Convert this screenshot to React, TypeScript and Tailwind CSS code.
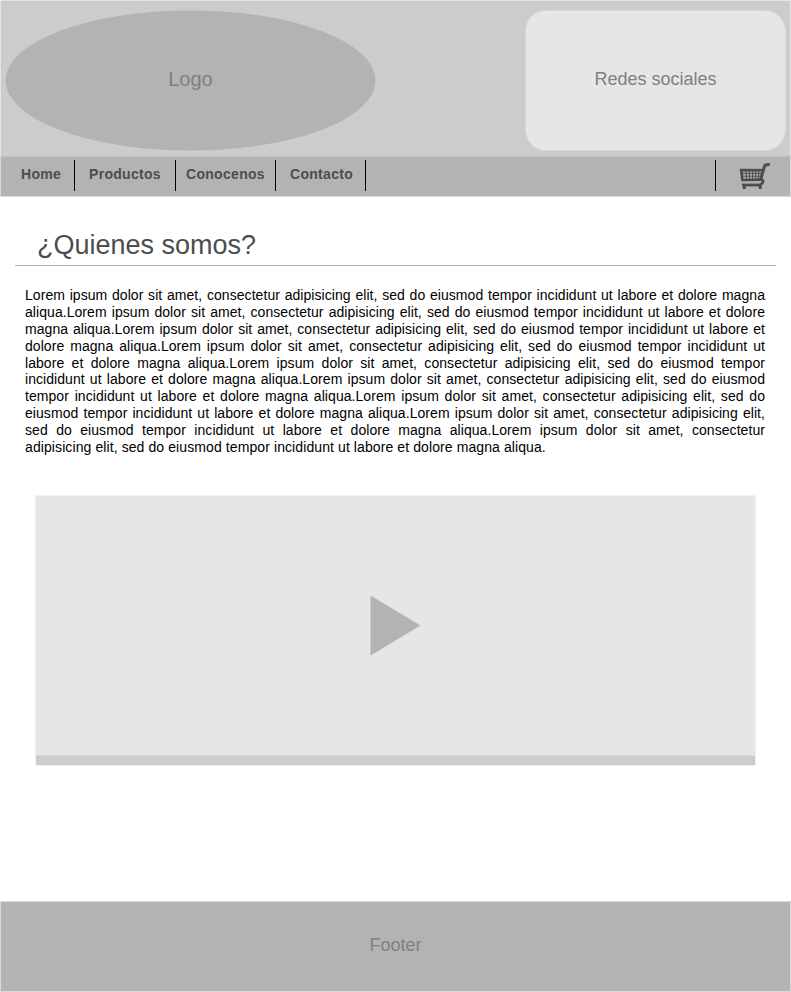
const links = [
  { label: "Home", cell: "w-[75px] pl-[21px]" },
  { label: "Productos", cell: "w-[101px] pl-[14px]" },
  { label: "Conocenos", cell: "w-[100px] pl-[10px]" },
  { label: "Contacto", cell: "w-[90px] pl-[14px]" },
];

const lines = [
  "Lorem ipsum dolor sit amet, consectetur adipisicing elit, sed do eiusmod tempor incididunt ut labore et dolore magna",
  "aliqua.Lorem ipsum dolor sit amet, consectetur adipisicing elit, sed do eiusmod tempor incididunt ut labore et dolore",
  "magna aliqua.Lorem ipsum dolor sit amet, consectetur adipisicing elit, sed do eiusmod tempor incididunt ut labore et",
  "dolore magna aliqua.Lorem ipsum dolor sit amet, consectetur adipisicing elit, sed do eiusmod tempor incididunt ut",
  "labore et dolore magna aliqua.Lorem ipsum dolor sit amet, consectetur adipisicing elit, sed do eiusmod tempor",
  "incididunt ut labore et dolore magna aliqua.Lorem ipsum dolor sit amet, consectetur adipisicing elit, sed do eiusmod",
  "tempor incididunt ut labore et dolore magna aliqua.Lorem ipsum dolor sit amet, consectetur adipisicing elit, sed do",
  "eiusmod tempor incididunt ut labore et dolore magna aliqua.Lorem ipsum dolor sit amet, consectetur adipisicing elit,",
  "sed do eiusmod tempor incididunt ut labore et dolore magna aliqua.Lorem ipsum dolor sit amet, consectetur",
];

function CartIcon() {
  return (
    <svg width="33" height="31" viewBox="0 0 33 31" fill="none" stroke="#4d4d4d">
      <path d="M29.6 4.4l-3 .5c-.5.1-.8.4-1 1L21.8 19" strokeWidth="3" strokeLinecap="round" strokeLinejoin="round" />
      <path d="M.8 10.2h23.4" strokeWidth="2.8" />
      <path d="M2.2 10l1.2 10L22 19.6" strokeWidth="2.6" />
      <path d="M3 13.4h19.5M3.3 16.2h18.5M7 10l.5 9.5M10.3 10l.3 9.5M13.6 10v9.5M16.9 10l-.2 9.5M20 10l-.6 9" strokeWidth="1" />
      <path d="M21.5 19.4c2.2.4 2.9 1.4 2.5 2.6-.4 1.2-1.4 1.7-2.3 2.5" strokeWidth="2.6" />
      <path d="M3 25H22.8" strokeWidth="2.8" />
      <path d="M5.2 25v4M21.2 25v4" strokeWidth="3" />
    </svg>
  );
}

export default function App() {
  return (
    <div className="flex h-[992px] w-[791px] flex-col bg-white font-['Liberation_Sans',Arial,sans-serif]">
      <header className="flex h-[156px] shrink-0 justify-between border border-b-0 border-[#e5e5e5] bg-[#cccccc] pt-[9px] pr-1 pl-1">
        <div className="grid h-[141px] w-[371px] place-items-center">
          <svg className="col-start-1 row-start-1" width="371" height="141">
            <ellipse cx="185.5" cy="70.5" rx="185" ry="70" fill="#b3b3b3" />
          </svg>
          <span className="col-start-1 row-start-1 -mt-[3px] text-[20px] leading-6 text-[#808080]">Logo</span>
        </div>
        <div className="flex h-[141px] w-[261px] items-center justify-center rounded-[21px] border border-[#d9d9d9] bg-[#e6e6e6] pb-[4px] text-[18px] leading-5 text-[#808080]">
          Redes sociales
        </div>
      </header>

      <nav className="flex h-[41px] shrink-0 border border-t-[#bfbfbf] border-x-[#d9d9d9] border-b-[#d9d9d9] bg-[#b3b3b3] pt-[3px] text-[14px] leading-4 font-bold tracking-[0.3px] text-[#4d4d4d]">
        <div className="-ml-px flex h-[31px]">
          {links.map((link) => (
            <a key={link.label} className={`block border-r border-black pt-[6px] ${link.cell}`}>
              {link.label}
            </a>
          ))}
        </div>
        <div className="ml-auto flex h-[31px] w-[75px] border-l border-black pl-[23px]">
          <CartIcon />
        </div>
      </nav>

      <main className="flex flex-col">
        <h1 className="mx-[15px] mt-[30px] h-[39px] w-[761px] border-b border-[#b3b3b3] pt-px pl-[22px] text-[27px] leading-[34px] text-[#4d4d4d]">
          ¿Quienes somos?
        </h1>
        <div className="mt-[21px] ml-[25px] w-[740px] text-[14px] leading-[16.89px] tracking-[0.06px] whitespace-nowrap text-black">
          {lines.map((line, index) => (
            <p key={index} className="text-justify [text-align-last:justify]">{line}</p>
          ))}
          <p className="tracking-[0.095px]">adipisicing elit, sed do eiusmod tempor incididunt ut labore et dolore magna aliqua.</p>
        </div>
      </main>

      <section className="mt-auto mb-[135px] ml-[35px] flex h-[271px] w-[721px] shrink-0 flex-col border border-[#f2f2f2] bg-[#e6e6e6]">
        <div className="flex h-[260px] items-center justify-center border-b border-[#d9d9d9] pt-px">
          <svg width="52" height="62" viewBox="0 0 52 62">
            <path d="M.5 .5v60L50.5 30.5z" fill="#b3b3b3" />
          </svg>
        </div>
        <div className="h-[9px] bg-[#cccccc]" />
      </section>

      <footer className="flex h-[91px] shrink-0 items-center justify-center border border-[#d9d9d9] bg-[#b3b3b3] pb-[4px] text-[18px] leading-5 text-[#808080]">
        Footer
      </footer>
    </div>
  );
}
